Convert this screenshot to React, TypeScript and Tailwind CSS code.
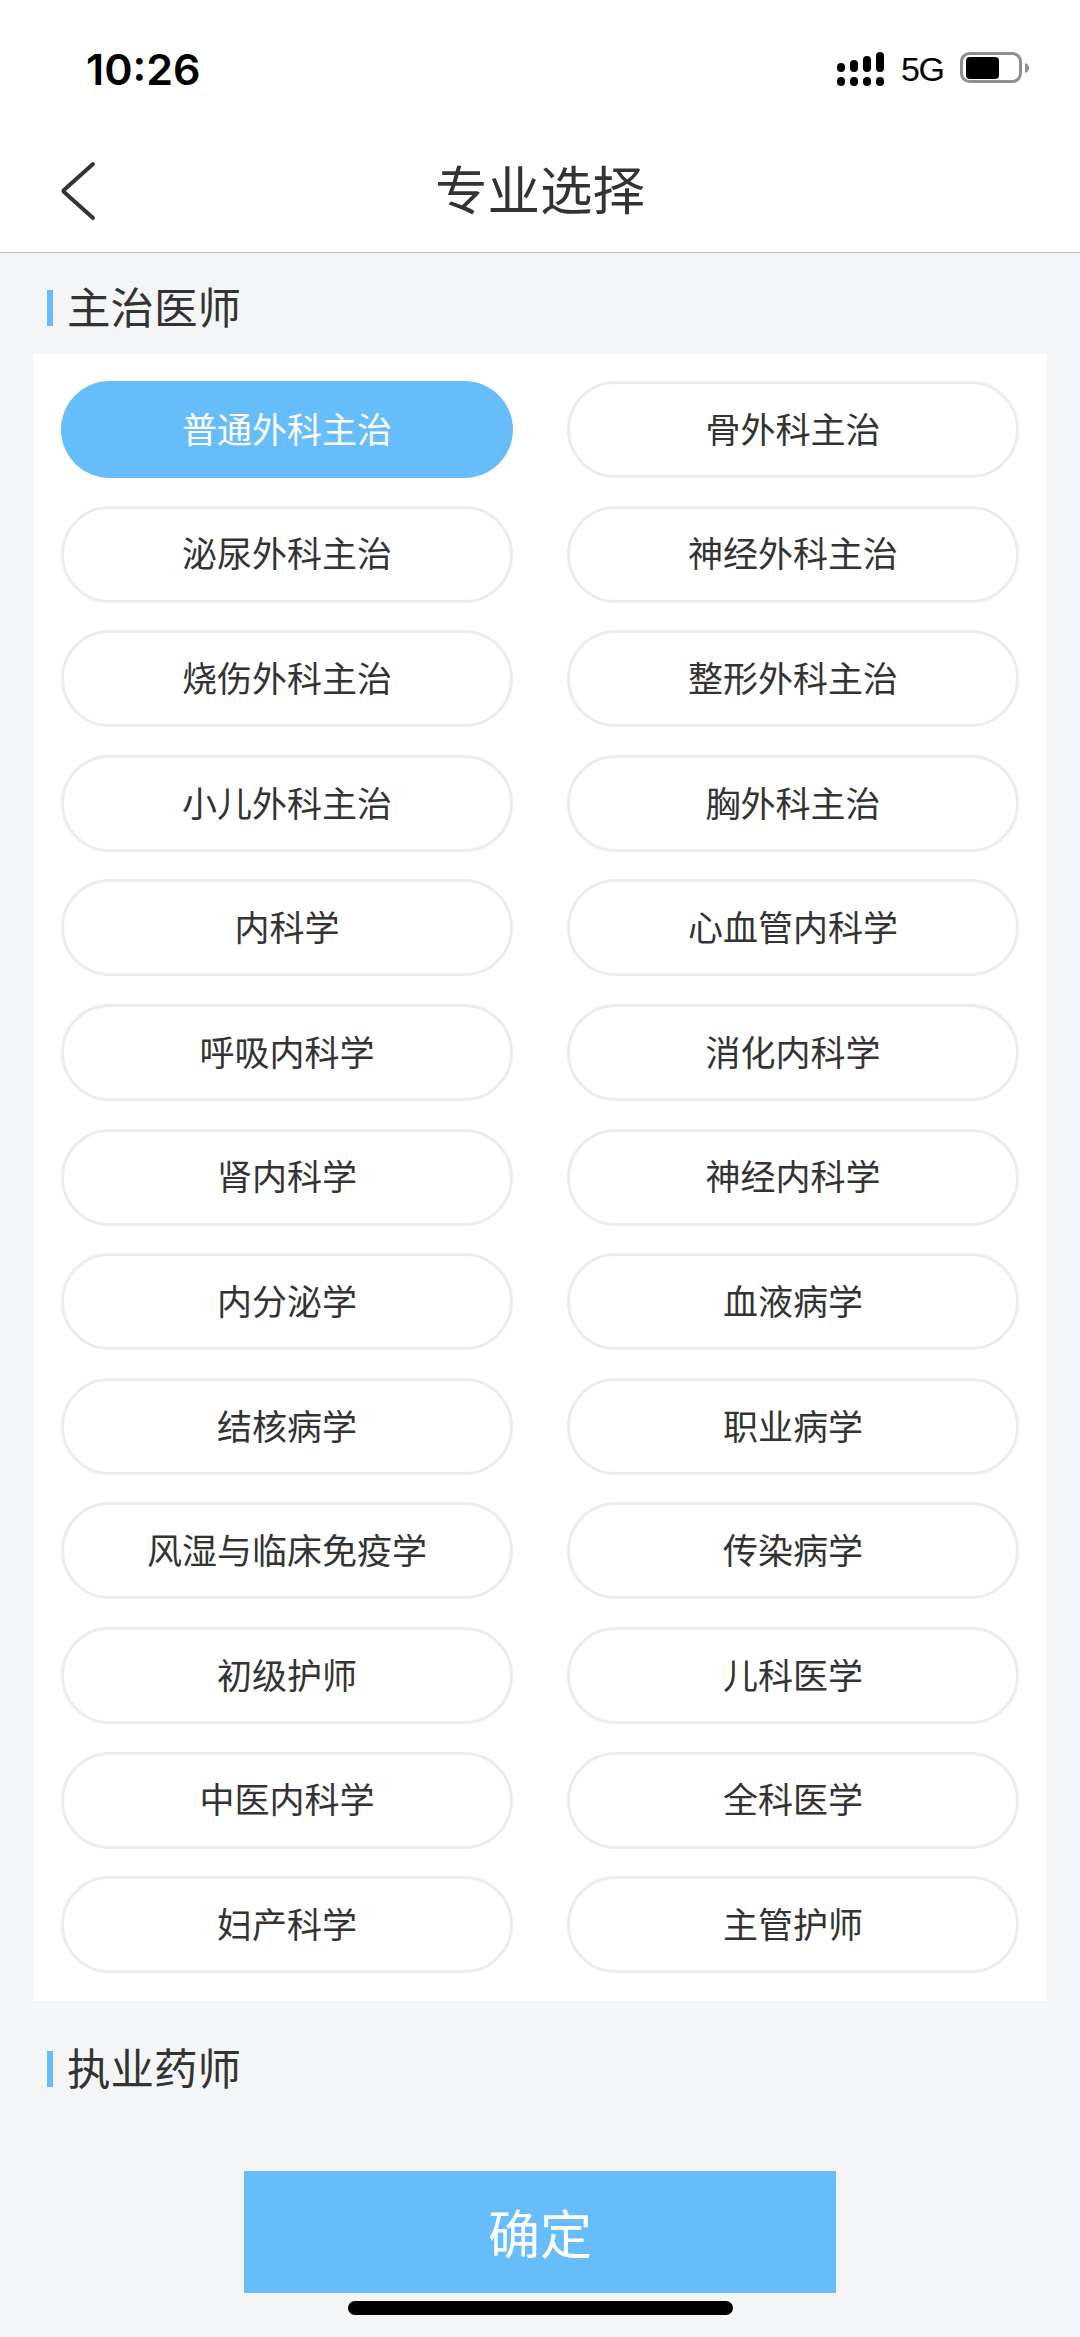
const font = { fontFamily: '"Noto Sans CJK SC", sans-serif' };

const rows: string[] = [
  "普通外科主治", "骨外科主治",
  "泌尿外科主治", "神经外科主治",
  "烧伤外科主治", "整形外科主治",
  "小儿外科主治", "胸外科主治",
  "内科学", "心血管内科学",
  "呼吸内科学", "消化内科学",
  "肾内科学", "神经内科学",
  "内分泌学", "血液病学",
  "结核病学", "职业病学",
  "风湿与临床免疫学", "传染病学",
  "初级护师", "儿科医学",
  "中医内科学", "全科医学",
  "妇产科学", "主管护师",
];

function SectionTitle({ text, className }: { text: string; className: string }) {
  return (
    <div className={`flex items-center ml-[47px] ${className}`}>
      <div className="w-[6px] h-[36px] bg-[#66bdfa]" />
      <span className="ml-[14px] mb-[5px] text-[43.5px] leading-[56px] text-[#333333] whitespace-nowrap">{text}</span>
    </div>
  );
}

function Signal() {
  return (
    <svg width="48" height="34" viewBox="0 0 48 34" fill="#000">
      <rect x="0" y="11" width="8" height="9" rx="4" />
      <rect x="13" y="8" width="8" height="12" rx="4" />
      <rect x="26" y="4" width="8" height="16" rx="4" />
      <rect x="39" y="0" width="8" height="20" rx="4" />
      <rect x="0" y="25" width="8" height="9" rx="4" />
      <rect x="13" y="25" width="8" height="9" rx="4" />
      <rect x="26" y="25" width="8" height="9" rx="4" />
      <rect x="39" y="25" width="8" height="9" rx="4" />
    </svg>
  );
}

function Battery() {
  return (
    <svg width="69" height="34" viewBox="0 0 69 34">
      <rect x="1.5" y="1.5" width="59" height="28" rx="8" fill="none" stroke="#8e8e8e" strokeWidth="3" />
      <rect x="6" y="5" width="33" height="22" rx="4" fill="#000" />
      <path d="M65 11 C68 12 69 14 69 16 C69 18 68 20 65 21 Z" fill="#8e8e8e" />
    </svg>
  );
}

export default function App() {
  return (
    <div className="w-[1080px] h-[2337px] bg-[#f3f5f7] flex flex-col overflow-hidden relative" style={font}>
      <div className="h-[252px] bg-white border-b border-[#b9bbbf] shrink-0 flex flex-col box-content">
        <div className="h-[132px] flex items-center justify-between pt-[6px] pl-[86px] pr-[51px]">
          <span className="text-[43px] font-semibold text-black leading-none" style={{ fontFamily: '"Inter", sans-serif' }}>10:26</span>
          <div className="flex items-center">
            <Signal />
            <span className="ml-[16px] w-[43px] text-[34px] tracking-[-1.5px] leading-none text-black whitespace-nowrap" style={{ fontFamily: '"Liberation Sans", sans-serif' }}>5G</span>
            <div className="ml-[16px] flex"><Battery /></div>
          </div>
        </div>
        <div className="h-[120px] flex items-center justify-center relative">
          <svg className="absolute left-[60px] top-[29px]" width="36" height="60" viewBox="0 0 36 60" fill="none">
            <path d="M33 3 L4 29 Q3 30 4 31 L33 57" stroke="#333333" strokeWidth="4" strokeLinecap="round" strokeLinejoin="round" />
          </svg>
          <span className="text-[52.5px] leading-none text-[#333333] mt-[-10px]">专业选择</span>
        </div>
      </div>

      <SectionTitle text="主治医师" className="mt-[27px] h-[56px]" />

      <div className="mt-[18px] mx-[33px] h-[1647px] bg-white pt-[27px] px-[28px] shrink-0">
        <div className="grid grid-cols-[452px_452px] justify-between gap-y-[27.6px]">
          {rows.map((r, i) => (
            <div
              key={r}
              className={
                i === 0
                  ? "h-[97px] pb-[3px] rounded-full bg-[#66bdfa] text-white text-[35px] flex items-center justify-center"
                  : "h-[97px] pb-[3px] rounded-full bg-white border-[3px] border-[#ececec] text-[#333333] text-[35px] flex items-center justify-center"
              }
            >
              {r}
            </div>
          ))}
        </div>
      </div>

      <SectionTitle text="执业药师" className="mt-[40px] h-[56px]" />

      <div className="mt-[18px] mx-[33px] h-[2px] bg-[#f6f7f8] shrink-0" />

      <div className="mt-[54px] mx-auto w-[592px] h-[122px] bg-[#66bdfa] text-white text-[52px] flex items-center justify-center shrink-0">
        确定
      </div>

      <div className="mt-[8px] mx-auto w-[385px] h-[14px] rounded-full bg-black shrink-0" />
    </div>
  );
}
